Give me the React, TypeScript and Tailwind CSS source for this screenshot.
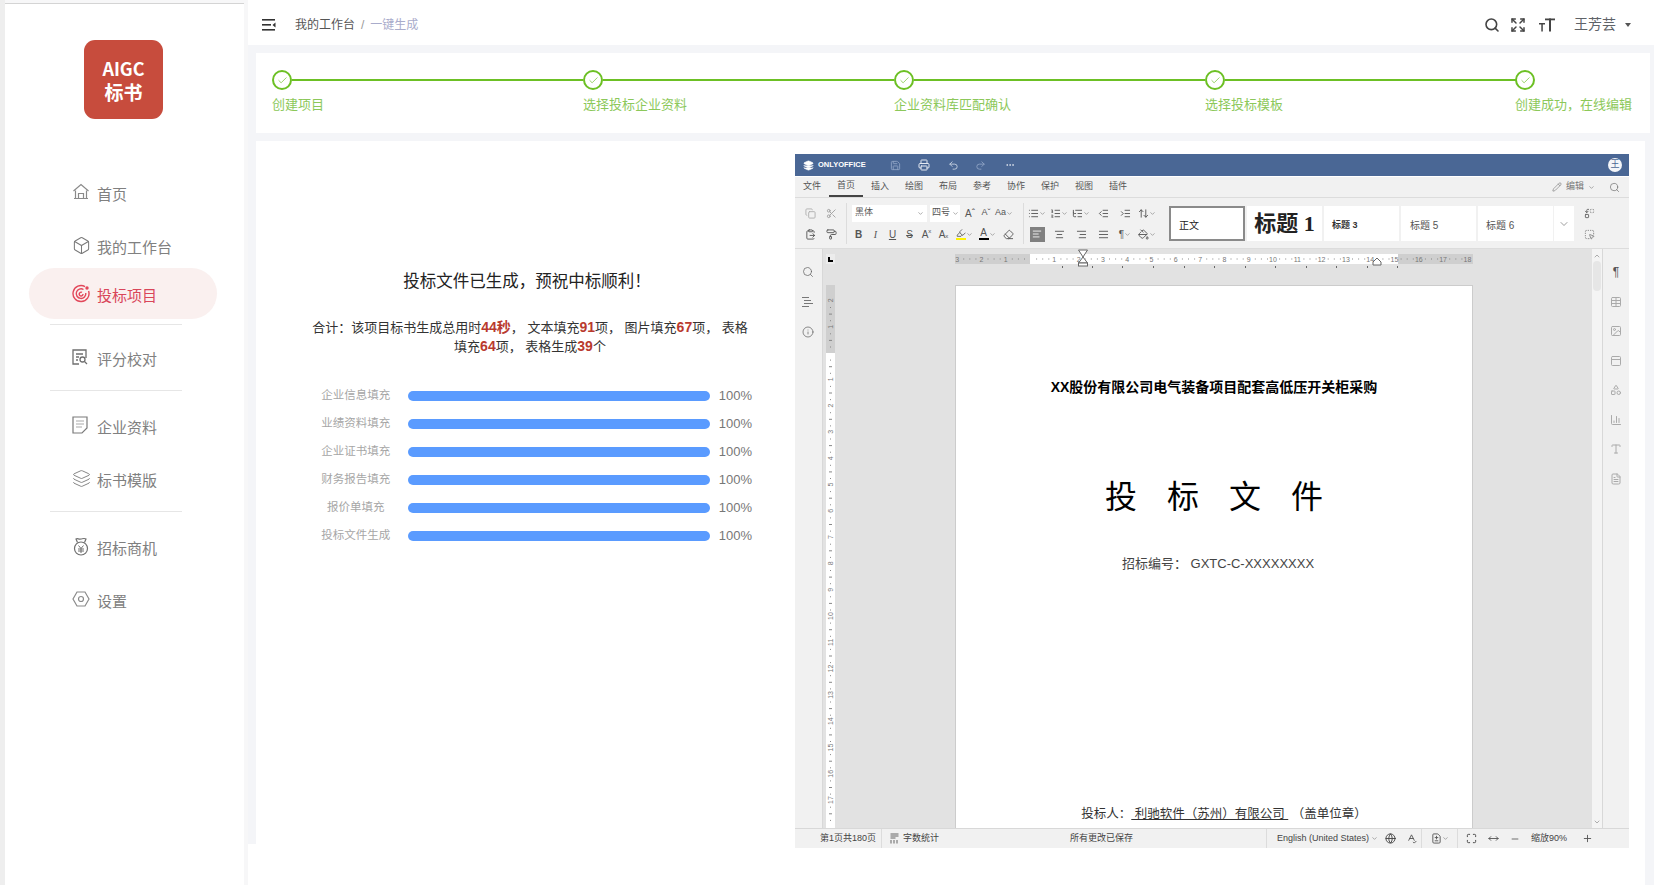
import React from "react";
import {
  Search,
  Expand,
  Check,
  Copy,
  Scissors,
  ClipboardPaste,
  PaintRoller,
  ChevronDown,
  Save,
  Printer,
  Undo2,
  Redo2,
  Ellipsis,
  Pencil,
  List,
  ListOrdered,
  ListTree,
  IndentDecrease,
  IndentIncrease,
  ArrowUpDown,
  AlignLeft,
  AlignCenter,
  AlignRight,
  AlignJustify,
  Highlighter,
  Eraser,
  PaintBucket,
  Replace,
  SquareDashedMousePointer,
  Table,
  Image,
  PanelTop,
  Shapes,
  ChartColumn,
  Type,
  FileText,
  Info,
  Globe,
  SpellCheck,
  FileDiff,
  Maximize,
  MoveHorizontal,
  Minus,
  Plus,
  Layers,
  Box,
  ChevronUp,
} from "lucide-react";

// sidebar icons that lucide has no close match for
const HomeIcon = () => (
  <svg width="18" height="18" viewBox="0 0 18 18" fill="none" stroke="#8a8a8a" strokeWidth="1.2">
    <path d="M1.5 8 9 1.5 16.5 8" />
    <path d="M3.5 7.5V15M14.5 7.5V15M2 15.5h14" />
    <path d="M6.5 15v-4.5h5V15" />
  </svg>
);

const TargetIcon = () => (
  <svg width="19" height="19" viewBox="0 0 19 19" fill="none" stroke="#e2475a" strokeWidth="1.4">
    <path d="M13 2.6A8 8 0 1 0 16.6 7" />
    <path d="M11.5 5.5A4.8 4.8 0 1 0 13.8 9" />
    <path d="M10 8.4a1.9 1.9 0 1 0 1 1.6" />
    <circle cx="15" cy="4" r="1.7" fill="#e2475a" stroke="none" />
  </svg>
);

const ReviewIcon = () => (
  <svg width="16" height="17" viewBox="0 0 16 17" fill="none" stroke="#6f6f6f" strokeWidth="1.3">
    <path d="M7 15H1V1h13v8" />
    <path d="M4 5h7M4 8h3M4 11h2" />
    <circle cx="10.5" cy="10.5" r="2.5" />
    <path d="m12.5 12.5 2.5 2.5" />
  </svg>
);

const DocIcon = () => (
  <svg width="16" height="18" viewBox="0 0 16 18" fill="none" stroke="#7a7a7a" strokeWidth="1.2">
    <path d="M1 1h14v11l-5 5H1z" />
    <path d="M4 5h8M4 8h8M4 11h6" stroke="#aaa" />
  </svg>
);

const MoneyBagIcon = () => (
  <svg width="18" height="19" viewBox="0 0 18 19" fill="none" stroke="#6f6f6f" strokeWidth="1.2">
    <path d="M5.5 5.5 4 2c1.500-1 2.500.5 5 0 2.500-.5 3.500-1 5 0l-1.500 3.500" />
    <circle cx="9" cy="11.500" r="6.500" />
    <path d="m6.500 8.500 2.500 3 2.500-3M6 12h6M6 14h6M9 11.500V16" strokeWidth="1" />
  </svg>
);

const GearIcon = () => (
  <svg width="18" height="18" viewBox="0 0 18 18" fill="none" stroke="#8a8a8a" strokeWidth="1.2">
    <path d="M5 2h8l4 7-4 7H5L1 9z" />
    <circle cx="9" cy="9" r="2.500" />
  </svg>
);

const MenuFoldIcon = () => (
  <svg width="14" height="12" viewBox="0 0 14 12" fill="#333">
    <rect y="0" width="13" height="1.600" />
    <rect y="5" width="9" height="1.600" />
    <rect y="10" width="13" height="1.600" />
    <path d="M13.500 3.500v5L10.500 6z" />
  </svg>
);

const FontSizeIcon = () => (
  <svg width="16" height="14" viewBox="0 0 16 14" fill="#444">
    <rect x="6" y="0.500" width="10" height="1.800" />
    <rect x="10" y="0.500" width="2" height="13" />
    <rect x="0" y="5" width="6" height="1.500" />
    <rect x="2.300" y="5" width="1.500" height="8.500" />
  </svg>
);

const HeadingsIcon = () => (
  <svg width="13" height="12" viewBox="0 0 13 12" fill="none" stroke="#777" strokeWidth="1.2">
    <path d="M1 1.500h7M3 4.500h7M3 7.500h9M1 10.500h7" />
  </svg>
);

const WordCountIcon = () => (
  <svg width="9" height="11" viewBox="0 0 9 11" fill="none" stroke="#555" strokeWidth="0.900">
    <path d="M0.500 1h8M0.500 3h8M0.500 5h5" />
    <path d="M1 7v3.500M4 7v3.500M7 7v3.500" />
  </svg>
);

const HorizontalRuler = () => {
  const numbers: number[] = [];
  for (let n = -3; n <= 18; n++) numbers.push(n);
  const tabs = [107, 137, 167, 198, 229, 259, 290, 320, 351, 381, 412, 442];
  return (
    <svg width="518" height="22" viewBox="0 0 518 22">
      <rect x="0" y="5" width="518" height="10" fill="#cfcfcf" />
      <rect x="75" y="5" width="368" height="10" fill="#ffffff" />
      {numbers.map((n) => {
        const x = 75 + n * 24.3;
        return (
          <g key={n}>
            {n !== 0 && (
              <text x={x} y="12.500" fontSize="7" textAnchor="middle" fill="#777777">
                {Math.abs(n)}
              </text>
            )}
            {n < 18 &&
              [1, 2, 3].map((k) => <rect key={k} x={x + k * 6.1} y="9.500" width="1" height="1" fill="#888888" />)}
          </g>
        );
      })}
      {tabs.map((x) => (
        <rect key={x} x={x} y="17" width="1" height="2" fill="#666666" />
      ))}
      <path d="M123.500 1h9L128 8zM128 8l4.500 6h-9z" fill="#fff" stroke="#666" />
      <rect x="123.500" y="14" width="9" height="3" fill="#fff" stroke="#666" />
      <path d="m422 9 4 4v3h-8v-3z" fill="#fff" stroke="#666" />
    </svg>
  );
};

const VerticalRuler = () => {
  const numbers: number[] = [];
  for (let n = -2; n <= 17; n++) numbers.push(n);
  return (
    <svg width="9" height="543" viewBox="0 0 9 543">
      <rect x="0" y="0" width="9" height="68" fill="#cfcfcf" />
      <rect x="0" y="68" width="9" height="475" fill="#ffffff" />
      {numbers.map((n) => {
        const y = 68 + n * 26.3;
        return (
          <g key={n}>
            {n !== 0 && (
              <text x="4.500" y={y + 2.500} fontSize="7" textAnchor="middle" fill="#777777" transform={`rotate(-90 4.500 ${y})`}>
                {Math.abs(n)}
              </text>
            )}
            {[1, 2, 3].map((k) => (
              <rect key={k} x={k === 2 ? 3 : 4} y={y + k * 6.6} width={k === 2 ? 3 : 1} height="1" fill="#888888" />
            ))}
          </g>
        );
      })}
    </svg>
  );
};

const navTop = [
  { icon: <HomeIcon />, label: "首页", cls: "" },
  { icon: <Box size={19} strokeWidth={1.3} color="#7a7a7a" />, label: "我的工作台", cls: "mt-[13px]" },
];

const steps = ["创建项目", "选择投标企业资料", "企业资料库匹配确认", "选择投标模板"];

const progress = ["企业信息填充", "业绩资料填充", "企业证书填充", "财务报告填充", "报价单填充", "投标文件生成"];

const tabs = ["文件", "首页", "插入", "绘图", "布局", "参考", "协作", "保护", "视图", "插件"];

const NavItem = ({ icon, label, className }: { icon: React.ReactNode; label: string; className?: string }) => (
  <div className={`flex h-10 items-center pl-[67px] ${className ?? ""}`}>
    <span className="-mt-[6px] flex w-[25px] shrink-0">{icon}</span>
    <span className="text-[15px] text-[#808080]">{label}</span>
  </div>
);

const Divider = ({ className }: { className: string }) => (
  <div className={`ml-[45px] h-px w-[132px] bg-[#e6e6e6] ${className}`}></div>
);

const ToolCell = ({ children, className }: { children: React.ReactNode; className: string }) => (
  <span className={`flex h-5 items-center justify-center text-[#555] ${className}`}>{children}</span>
);

const Chev = () => <ChevronDown size={7} color="#777" strokeWidth={2} className="shrink-0" />;

const App: React.FC = () => {
  return (
    <div className="flex h-[885px] w-[1654px] overflow-hidden bg-[#f4f5f8] font-['Liberation_Sans','Noto_Sans_CJK_SC',sans-serif]">
      {/* sidebar */}
      <aside className="h-full w-[248px] shrink-0 pl-[5px] pt-[3px] bg-[linear-gradient(90deg,#eeeeee_0,#eeeeee_5px,#f7f7f8_5px)]">
        <div className="h-full w-[239px] bg-white">
          <div className="h-px bg-[#d4d4d4]"></div>
          <div className="ml-[79px] mt-9 flex h-[79px] w-[79px] flex-col items-center justify-center rounded-[11px] bg-[#c74c3d] font-['Noto_Sans_CJK_SC',sans-serif] font-bold leading-[24px] text-white">
            <span className="text-[18px]">AIGC</span>
            <span className="text-[19px]">标书</span>
          </div>
          <nav className="mt-[56px]">
            {navTop.map((item) => (
              <NavItem key={item.label} icon={item.icon} label={item.label} className={item.cls} />
            ))}
            <div className="ml-6 flex h-[51px] w-[188px] items-center rounded-full bg-[#faf0ef] pl-[43px] pt-[5px]">
              <span className="-mt-[6px] flex w-[25px] shrink-0">
                <TargetIcon />
              </span>
              <span className="text-[15px] text-[#d9465a]">投标项目</span>
            </div>
            <Divider className="mt-[5px]" />
            <NavItem icon={<ReviewIcon />} label="评分校对" className="mt-[15px]" />
            <Divider className="mt-[10px]" />
            <NavItem icon={<DocIcon />} label="企业资料" className="mt-[17px]" />
            <NavItem icon={<Layers size={19} strokeWidth={1.2} color="#7f7f7f" />} label="标书模版" className="mt-[13px]" />
            <Divider className="mt-[10px]" />
            <NavItem icon={<MoneyBagIcon />} label="招标商机" className="mt-[17px]" />
            <NavItem icon={<GearIcon />} label="设置" className="mt-[13px]" />
          </nav>
        </div>
      </aside>

      <main className="flex min-w-0 flex-1 flex-col">
        {/* top bar */}
        <header className="flex h-[45px] shrink-0 items-center bg-white pl-[14px] pr-[23px] pt-1">
          <MenuFoldIcon />
          <div className="ml-[19px] flex items-center text-[12px]">
            <span className="text-[#555]">我的工作台</span>
            <span className="mx-[6px] text-[#999]">/</span>
            <span className="text-[#a9accb]">一键生成</span>
          </div>
          <div className="ml-auto flex items-center">
            <Search size={16} strokeWidth={2.4} color="#444" />
            <span className="ml-[10px] flex">
              <Expand size={16} strokeWidth={2.2} color="#444" />
            </span>
            <span className="ml-[13px] flex">
              <FontSizeIcon />
            </span>
            <span className="ml-[19px] text-[14px] text-[#5f6368]">王芳芸</span>
            <span className="ml-[9px] h-0 w-0 border-x-[3.500px] border-t-4 border-x-transparent border-t-[#555]"></span>
          </div>
        </header>

        {/* stepper */}
        <section className="ml-2 mr-1 mt-2 flex h-20 shrink-0 bg-white pl-4 pt-[17px]">
          {steps.map((label) => (
            <div key={label} className="w-[311px] shrink-0">
              <div className="flex h-5 items-center">
                <span className="flex h-5 w-5 shrink-0 items-center justify-center rounded-full border-2 border-[#6cc024]">
                  <Check size={11} color="#6cc024" strokeWidth={1.5} />
                </span>
                <span className="h-[2px] flex-1 bg-[#6cc024]"></span>
              </div>
              <div className="mt-[6px] text-[13px] leading-[18px] text-[#8cc85a]">{label}</div>
            </div>
          ))}
          <div className="-ml-px">
            <span className="flex h-5 w-5 items-center justify-center rounded-full border-2 border-[#6cc024]">
              <Check size={11} color="#6cc024" strokeWidth={1.5} />
            </span>
            <div className="mt-[6px] whitespace-nowrap text-[13px] leading-[18px] text-[#8cc85a]">
              创建成功，在线编辑
            </div>
          </div>
        </section>

        {/* generated result + editor */}
        <div className="mt-2 flex min-h-0 flex-1 pr-[9px]">
          <div className="flex w-2 shrink-0 flex-col">
            <div className="flex-1"></div>
            <div className="h-[41px] bg-white"></div>
          </div>
          <section className="flex min-w-0 flex-1 bg-white">
            <div className="w-[539px] shrink-0 pl-[52px] pt-[128px]">
              <div className="w-[444px]">
                <h2 className="pr-[6px] text-center text-[16.500px] leading-6 text-[#222]">投标文件已生成，预祝中标顺利！</h2>
                <p className="mt-[25px] whitespace-nowrap text-center text-[13px] leading-[19px] text-[#333]">
                  合计：该项目标书生成总用时<b className="text-[14px] text-[#b93a2e]">44秒</b>， 文本填充
                  <b className="text-[14px] text-[#b93a2e]">91</b>项， 图片填充
                  <b className="text-[14px] text-[#b93a2e]">67</b>项， 表格
                  <br />
                  填充<b className="text-[14px] text-[#b93a2e]">64</b>项， 表格生成
                  <b className="text-[14px] text-[#b93a2e]">39</b>个
                </p>
                <div className="mt-[26px]">
                  {progress.map((label) => (
                    <div key={label} className="flex h-7 items-center">
                      <span className="w-24 text-center text-[11.500px] text-[#a6a6a6]">{label}</span>
                      <span className="ml-1 h-[10px] w-[303px] rounded-full bg-[#5a9bff]"></span>
                      <span className="ml-[9px] text-[13px] text-[#777]">100%</span>
                    </div>
                  ))}
                </div>
              </div>
            </div>

            {/* onlyoffice frame */}
            <div className="mt-[13px] flex h-[694px] w-[834px] shrink-0 flex-col bg-[#f1f1f1]">
              <div className="flex h-[22px] items-center bg-[#4a6795] pl-2 text-white">
                <Layers size={11} fill="#fff" strokeWidth={1.5} />
                <span className="ml-[4px] w-[46px] whitespace-nowrap text-[7.500px] font-bold">ONLYOFFICE</span>
                <span className="ml-[26px] flex">
                  <Save size={11} color="#8da2c4" />
                </span>
                <span className="ml-[17px] flex">
                  <Printer size={12} color="#e4e9f1" />
                </span>
                <span className="ml-[18px] flex">
                  <Undo2 size={11} color="#c5d0e0" />
                </span>
                <span className="ml-[16px] flex">
                  <Redo2 size={11} color="#8da2c4" />
                </span>
                <span className="ml-[19px] flex">
                  <Ellipsis size={10} color="#dfe5ee" />
                </span>
                <span className="ml-auto mr-[7px] flex h-[14px] w-[14px] items-center justify-center rounded-full bg-[#f4f6f9] text-[9px] text-[#4a6795]">
                  王
                </span>
              </div>
              <div className="h-px bg-white"></div>

              {/* tabs */}
              <div className="flex h-[21px] items-stretch border-b border-[#dcdcdc] text-[9px] text-[#555]">
                {tabs.map((t) => (
                  <span
                    key={t}
                    className={
                      t === "首页"
                        ? "flex w-[34px] items-center justify-center border-b-2 border-[#444]"
                        : "flex w-[34px] items-center justify-center"
                    }
                  >
                    {t}
                  </span>
                ))}
                <span className="ml-auto flex items-center pr-[9px]">
                  <Pencil size={10} color="#666" strokeWidth={1.3} />
                  <span className="ml-1 text-[#777]">编辑</span>
                  <span className="ml-[4px] flex">
                    <Chev />
                  </span>
                  <span className="ml-[14px] flex">
                    <Search size={11} color="#666" strokeWidth={1.4} />
                  </span>
                </span>
              </div>

              {/* toolbar */}
              <div className="flex h-[51px] shrink-0 items-start border-b border-[#dcdcdc]">
                <div className="w-[51px] pl-[5px] pt-[5px]">
                  <div className="flex">
                    <ToolCell className="w-[21px]">
                      <Copy size={11} color="#b0b0b0" />
                    </ToolCell>
                    <ToolCell className="w-[21px]">
                      <Scissors size={11} color="#a0a0a0" />
                    </ToolCell>
                  </div>
                  <div className="mt-px flex">
                    <ToolCell className="w-[21px]">
                      <ClipboardPaste size={11} color="#555" />
                    </ToolCell>
                    <ToolCell className="w-[21px]">
                      <PaintRoller size={11} color="#555" />
                    </ToolCell>
                  </div>
                </div>
                <div className="mt-[5px] h-[41px] w-px bg-[#dcdcdc]"></div>

                <div className="w-[176px] pt-[5px]">
                  <div className="flex h-5 items-center whitespace-nowrap pl-[5px] text-[9px] text-[#555]">
                    <span className="flex h-[17px] w-[75px] items-center justify-between bg-white px-[3px]">
                      黑体
                      <Chev />
                    </span>
                    <span className="ml-[3px] flex h-[17px] w-[30px] items-center justify-between bg-white pl-[2px] pr-px">
                      四号
                      <Chev />
                    </span>
                    <ToolCell className="ml-[2px] w-4 text-[10px]">Aˆ</ToolCell>
                    <ToolCell className="w-4 text-[9px]">Aˇ</ToolCell>
                    <ToolCell className="w-[20px] text-[9px]">
                      Aa
                      <Chev />
                    </ToolCell>
                  </div>
                  <div className="mt-px flex h-5 items-center pl-[3px] text-[10px]">
                    <ToolCell className="w-[17px] font-bold">B</ToolCell>
                    <ToolCell className="w-[17px] font-['Liberation_Serif'] italic">I</ToolCell>
                    <ToolCell className="w-[17px] underline">U</ToolCell>
                    <ToolCell className="w-[17px] line-through">S</ToolCell>
                    <ToolCell className="w-[17px]">
                      A<sup className="text-[6px]">x</sup>
                    </ToolCell>
                    <ToolCell className="w-[17px]">
                      A<sub className="text-[6px]">x</sub>
                    </ToolCell>
                    <ToolCell className="w-[24px]">
                      <span className="flex flex-col items-center">
                        <Highlighter size={10} color="#555" />
                        <span className="h-[2px] w-[10px] bg-[#fff200]"></span>
                      </span>
                      <Chev />
                    </ToolCell>
                    <ToolCell className="w-[22px]">
                      <span className="flex flex-col items-center leading-[10px]">
                        A<span className="h-[2px] w-[10px] bg-black"></span>
                      </span>
                      <Chev />
                    </ToolCell>
                    <ToolCell className="w-[20px]">
                      <Eraser size={11} color="#555" />
                    </ToolCell>
                  </div>
                </div>
                <div className="mt-[5px] h-[41px] w-px bg-[#dcdcdc]"></div>

                <div className="w-[142px] pl-[2px] pt-[5px]">
                  <div className="flex">
                    {[List, ListOrdered, ListTree].map((Icon, i) => (
                      <ToolCell key={i} className="w-[22px]">
                        <Icon size={11} color="#555" />
                        <Chev />
                      </ToolCell>
                    ))}
                    <ToolCell className="w-[22px]">
                      <IndentDecrease size={11} color="#555" />
                    </ToolCell>
                    <ToolCell className="w-[22px]">
                      <IndentIncrease size={11} color="#555" />
                    </ToolCell>
                    <ToolCell className="w-[22px]">
                      <ArrowUpDown size={11} color="#555" />
                      <Chev />
                    </ToolCell>
                  </div>
                  <div className="mt-px flex">
                    <ToolCell className="w-[22px]">
                      <span className="flex h-[15px] w-[15px] items-center justify-center bg-[#808080]">
                        <AlignLeft size={10} color="#fff" />
                      </span>
                    </ToolCell>
                    <ToolCell className="w-[22px]">
                      <AlignCenter size={11} color="#555" />
                    </ToolCell>
                    <ToolCell className="w-[22px]">
                      <AlignRight size={11} color="#555" />
                    </ToolCell>
                    <ToolCell className="w-[22px]">
                      <AlignJustify size={11} color="#555" />
                    </ToolCell>
                    <ToolCell className="w-[22px] text-[10px]">
                      ¶<Chev />
                    </ToolCell>
                    <ToolCell className="w-[22px]">
                      <PaintBucket size={11} color="#555" />
                      <Chev />
                    </ToolCell>
                  </div>
                </div>

                <div className="ml-[3px] mt-2 flex h-[35px] gap-[2px]">
                  <span className="flex w-[76px] items-center border-2 border-[#8a8a8a] bg-white pl-2 pt-1 text-[10px] text-[#222]">
                    正文
                  </span>
                  <span className="flex w-[75px] items-center justify-center bg-white font-['Liberation_Serif','Noto_Sans_CJK_SC',serif] text-[22px] font-bold leading-none text-[#222]">
                    标题 1
                  </span>
                  <span className="flex w-[75px] items-center bg-white pl-2 pt-1 text-[9px] font-bold text-[#333]">标题 3</span>
                  <span className="flex w-[75px] items-center bg-white pl-[9px] pt-1 text-[10px] text-[#555]">标题 5</span>
                  <span className="flex w-[75px] items-center bg-white pl-2 pt-1 text-[10px] text-[#555]">标题 6</span>
                  <span className="-ml-px flex w-[20px] items-center justify-center bg-white">
                    <ChevronDown size={12} color="#666" strokeWidth={1.3} />
                  </span>
                </div>
                <div className="w-[30px] pt-[5px]">
                  <ToolCell className="w-full">
                    <Replace size={11} color="#666" />
                  </ToolCell>
                  <ToolCell className="mt-px w-full">
                    <SquareDashedMousePointer size={11} color="#888" />
                  </ToolCell>
                </div>
              </div>

              {/* work area */}
              <div className="flex min-h-0 flex-1">
                <div className="flex w-[28px] shrink-0 flex-col items-center border-r border-[#d8d8d8] pr-[2px] pt-[17px]">
                  <Search size={12} color="#666" strokeWidth={1.5} />
                  <span className="mt-[18px] flex">
                    <HeadingsIcon />
                  </span>
                  <span className="mt-[18px] flex">
                    <Info size={12} color="#666" strokeWidth={1.5} />
                  </span>
                </div>

                <div className="flex min-w-0 flex-1 flex-col bg-[#e2e2e2]">
                  <div className="flex h-9 shrink-0 items-start">
                    <span className="ml-[3px] mt-[5px] flex h-[10px] w-[9px] items-end justify-start bg-[#ececec] pb-[2px] pl-[2px]">
                      <span className="h-[5px] w-[5px] border-b-2 border-l-2 border-black"></span>
                    </span>
                    <span className="ml-[120px] flex">
                      <HorizontalRuler />
                    </span>
                  </div>
                  <div className="flex min-h-0 flex-1 overflow-hidden">
                    <span className="ml-[3px] flex h-full">
                      <VerticalRuler />
                    </span>
                    <div className="ml-[120px] flex h-full w-[518px] flex-col items-center border-x border-t border-[#cccccc] bg-white pt-[91px] text-black">
                      <div className="text-[14px] font-bold leading-5">XX股份有限公司电气装备项目配套高低压开关柜采购</div>
                      <div className="mt-[80px] flex h-10 items-center gap-[30px] text-[32px] leading-10">
                        <span>投</span>
                        <span>标</span>
                        <span>文</span>
                        <span>件</span>
                      </div>
                      <div className="ml-2 mt-[37px] text-[13px] leading-5 text-[#444]">招标编号： GXTC-C-XXXXXXXX</div>
                      <div className="ml-5 mt-auto whitespace-pre pb-1 text-[12.500px] leading-5 text-[#333]">
                        投标人：<span className="underline"> 利驰软件（苏州）有限公司 </span> （盖单位章）
                      </div>
                    </div>
                  </div>
                </div>

                <div className="flex w-[10px] shrink-0 flex-col items-center bg-[#f4f4f4] pb-[2px] pt-[3px]">
                  <ChevronUp size={8} color="#888" />
                  <span className="mt-px h-[30px] w-[8px] rounded-sm bg-[#e6e6e6]"></span>
                  <span className="mt-auto flex">
                    <ChevronDown size={8} color="#888" />
                  </span>
                </div>
                <div className="flex w-[27px] shrink-0 flex-col items-center gap-[17.500px] border-l border-[#d8d8d8] pt-[17px]">
                  <span className="flex h-3 items-center text-[12px] text-[#555]">¶</span>
                  <Table size={12} color="#aaaaaa" />
                  <Image size={12} color="#aaaaaa" />
                  <PanelTop size={12} color="#aaaaaa" />
                  <Shapes size={12} color="#aaaaaa" />
                  <ChartColumn size={12} color="#aaaaaa" />
                  <Type size={12} color="#aaaaaa" />
                  <FileText size={12} color="#aaaaaa" />
                </div>
              </div>

              {/* status bar */}
              <div className="flex h-5 shrink-0 items-center border-t border-[#d8d8d8] text-[9px] text-[#444]">
                <span className="flex h-full w-[87px] items-center justify-end whitespace-nowrap border-r border-[#dcdcdc] pr-[5px]">
                  第1页共180页
                </span>
                <span className="flex w-[188px] items-center pl-2">
                  <WordCountIcon />
                  <span className="ml-[4px]">字数统计</span>
                </span>
                <span className="w-[196px] whitespace-nowrap">所有更改已保存</span>
                <span className="flex h-full items-center border-l border-[#dcdcdc] pl-[10px]">
                  <span className="w-[92px] whitespace-nowrap">English (United States)</span>
                  <span className="flex w-[10px] justify-center">
                    <Chev />
                  </span>
                  <span className="flex w-[22px] justify-center">
                    <Globe size={11} color="#444" />
                  </span>
                  <span className="flex w-[20px] justify-center">
                    <SpellCheck size={11} color="#555" />
                  </span>
                </span>
                <span className="flex h-full w-[36px] items-center justify-center border-l border-[#dcdcdc]">
                  <FileDiff size={11} color="#555" />
                  <Chev />
                </span>
                <span className="flex h-full items-center border-l border-[#dcdcdc] pl-2">
                  <Maximize size={11} color="#444" />
                  <span className="ml-[11px] flex">
                    <MoveHorizontal size={11} color="#555" />
                  </span>
                  <span className="ml-[11px] flex">
                    <Minus size={10} color="#555" />
                  </span>
                  <span className="ml-[11px] w-[46px] whitespace-nowrap">缩放90%</span>
                  <span className="ml-[5px] flex">
                    <Plus size={11} color="#555" />
                  </span>
                </span>
              </div>
            </div>
          </section>
        </div>
      </main>
    </div>
  );
};

export default App;
